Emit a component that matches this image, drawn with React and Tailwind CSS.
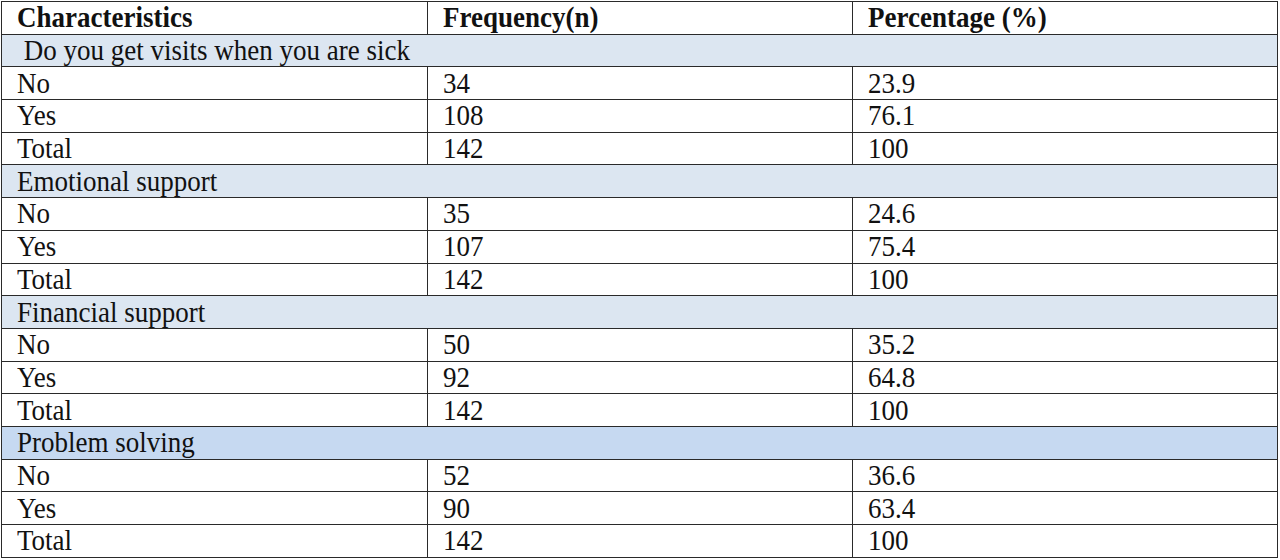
import { Fragment } from 'react'

const sections = [
  {
    title: ' Do you get visits when you are sick',
    bg: 'bg-[#dce6f1]',
    rows: [['No', '34', '23.9'], ['Yes', '108', '76.1'], ['Total', '142', '100']],
  },
  {
    title: 'Emotional support',
    bg: 'bg-[#dce6f1]',
    rows: [['No', '35', '24.6'], ['Yes', '107', '75.4'], ['Total', '142', '100']],
  },
  {
    title: 'Financial support',
    bg: 'bg-[#dce6f1]',
    rows: [['No', '50', '35.2'], ['Yes', '92', '64.8'], ['Total', '142', '100']],
  },
  {
    title: 'Problem solving',
    bg: 'bg-[#c6d9f1]',
    rows: [['No', '52', '36.6'], ['Yes', '90', '63.4'], ['Total', '142', '100']],
  },
]

const cell = 'border border-[#2a2a2a] pl-[15px] pr-2 align-middle text-left whitespace-pre'

// the scanned table is a little taller than wide, stretch the glyphs to match
const Txt = ({ children }) => (
  <span className="inline-block scale-y-[1.1] origin-center">{children}</span>
)

export default function App() {
  return (
    <div className="bg-white w-[1280px] h-[560px] overflow-hidden pt-[1px] pl-[1px] font-['Liberation_Serif',serif] text-[27px] leading-[31px] text-[#111]">
      <table className="border-collapse w-[1277px] table-fixed">
        <colgroup>
          <col className="w-[426px]" />
          <col className="w-[425px]" />
          <col className="w-[425px]" />
        </colgroup>
        <thead>
          <tr className="h-[32.7px]">
            <th className={`${cell} font-bold`}><Txt>Characteristics</Txt></th>
            <th className={`${cell} font-bold`}><Txt>Frequency(n)</Txt></th>
            <th className={`${cell} font-bold`}><Txt>Percentage (%)</Txt></th>
          </tr>
        </thead>
        <tbody>
          {sections.map((s) => (
            <Fragment key={s.title}>
              <tr className={`h-[32.7px] ${s.bg}`}>
                <td colSpan={3} className={cell}><Txt>{s.title}</Txt></td>
              </tr>
              {s.rows.map((r) => (
                <tr key={s.title + r[0]} className="h-[32.7px]">
                  <td className={cell}><Txt>{r[0]}</Txt></td>
                  <td className={cell}><Txt>{r[1]}</Txt></td>
                  <td className={cell}><Txt>{r[2]}</Txt></td>
                </tr>
              ))}
            </Fragment>
          ))}
        </tbody>
      </table>
    </div>
  )
}
